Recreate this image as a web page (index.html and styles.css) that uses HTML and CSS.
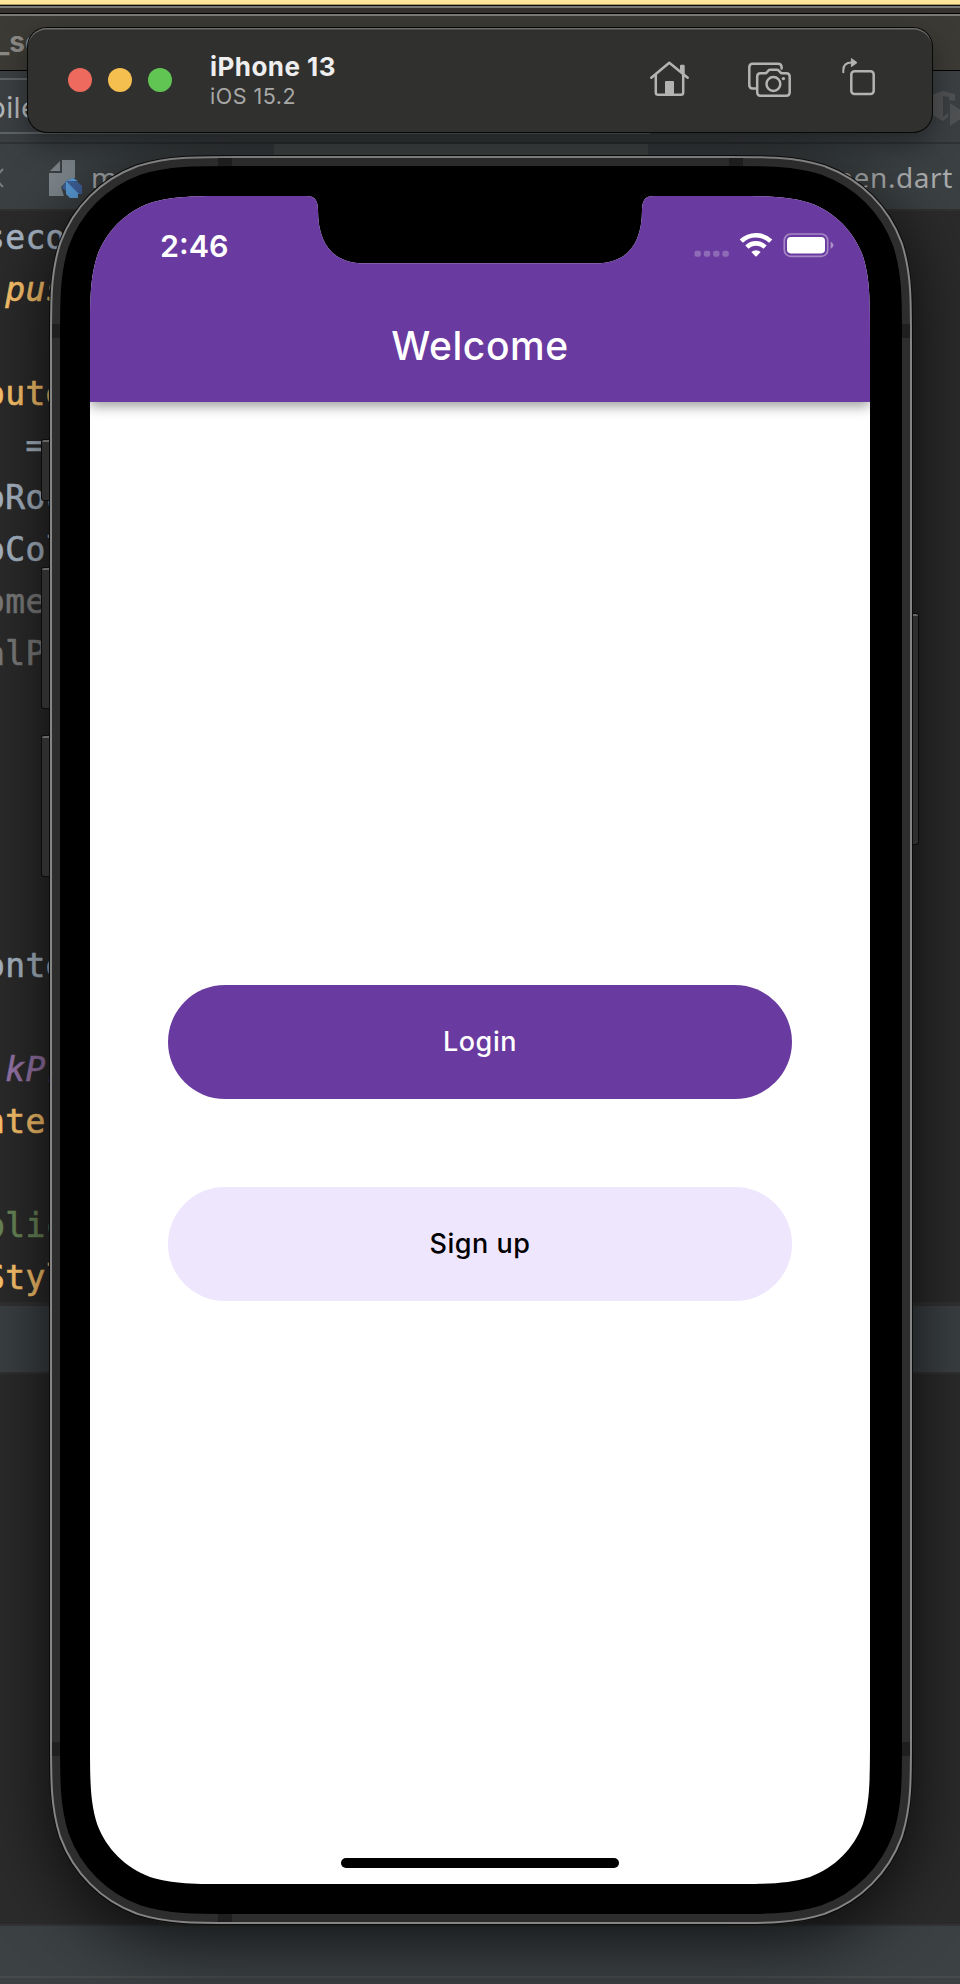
FILE: index.html
```html
<!DOCTYPE html>
<html lang="en">
<head>
<meta charset="utf-8">
<title>iPhone 13</title>
<link rel="stylesheet" href="styles.css">
</head>
<body>
<div class="desktop">
  <div class="editor">
    <div class="editor-top"></div>
    <div class="editor-strip"></div>
    <div class="editor-title">_sc</div>
    <div class="editor-toolbar">
      <div class="run-config">bile</div>
      <svg class="coverage-icon" viewBox="931 88 29 42" width="29" height="42"><path fill="#505152" d="M931 95L943 91L955 94V101L949 100V97L943 96V117L948 113V117L943 121L931 114ZM950 103L962 111V118L950 126Z"/></svg>
    </div>
    <div class="editor-tabs">
      <svg class="tab-close" viewBox="0 0 4 20" width="4" height="20"><path d="M-14 1L3 19M3 1L-14 19" stroke="#7b7e80" stroke-width="2"/></svg>
      <svg class="file-icon" viewBox="48 159 36 40" width="36" height="40">
        <path fill="#7d868b" d="M62 160H75V178L68 180L61 187L64 196H49V173H62Z"/>
        <path fill="#7d868b" d="M50 171L60 161V171Z"/>
        <path fill="#3f629c" d="M62 188L66 181L73 178L82 186V194H70Z"/>
        <path fill="#5b9fdb" d="M66 181L79 194H78V198H70L66 194ZM66 181L73 178L78 181Z"/>
      </svg>
      <span class="tab-name">main</span>
      <span class="tab-name tab-name-last">screen.dart</span>
      <div class="tab-selected"></div>
    </div>
    <pre class="code"><span class="c-text">secon</span>
<span class="c-fn c-it"> pus</span>

<span class="c-fn">oute</span>
<span class="c-text">  =</span>
<span class="c-text">oRou</span>
<span class="c-text">oCol</span>
<span class="c-dim">ome</span>
<span class="c-dim">alP</span>





<span class="c-text">onte</span>

<span class="c-const c-it"> kPr</span>
<span class="c-fn">nte</span>

<span class="c-str">plic</span>
<span class="c-fn">Styl</span></pre>
    <div class="panel-header"></div>
    <div class="panel-body"></div>
    <div class="panel-footer"></div>
    <div class="status-line"></div>
  </div>

  <div class="device">
    <div class="side-button mute"></div>
    <div class="side-button volume-up"></div>
    <div class="side-button volume-down"></div>
    <div class="side-button power"></div>
    <svg class="frame" viewBox="-40 -40 862 1768" width="862" height="1768">
      <defs>
        <path id="body" d="M145.2 0H636.8C678.6 0 699.5 0 722 7.1C746.6 16.1 765.9 35.4 774.9 60C782 82.5 782 103.4 782 145.2V1542.8C782 1584.6 782 1605.5 774.9 1628C765.9 1652.6 746.6 1671.9 722 1680.9C699.5 1688 678.6 1688 636.8 1688H145.2C103.4 1688 82.5 1688 60 1680.9C35.4 1671.9 16.1 1652.6 7.1 1628C0 1605.5 0 1584.6 0 1542.8V145.2C0 103.4 0 82.5 7.1 60C16.1 35.4 35.4 16.1 60 7.1C82.5 0 103.4 0 145.2 0Z"/>
      </defs>
      <use href="#body" stroke="#0b0b0b" stroke-width="82"/>
      <use href="#body" stroke="#858585" stroke-width="80"/>
      <use href="#body" stroke="#2d2d2d" stroke-width="76"/>
      <path fill="#1f1f1f" d="M128-38h14v8h-14zM639-38h14v8h-14zM128 1718h14v8h-14zM-38 128h8v14h-8zM812 128h8v14h-8zM-38 1546h8v14h-8zM812 1546h8v14h-8z"/>
      <use href="#body" stroke="#000" stroke-width="60"/>
    </svg>
    <div class="screen">
      <header class="app-bar">
        <div class="status-bar">
          <span class="clock">2:46</span>
          <svg class="status-icons" viewBox="694 228 142 34" width="142" height="34">
            <g fill="#fff" fill-opacity=".25"><rect x="694.5" y="250.7" width="6.4" height="6" rx="2"/><rect x="703.8" y="250.7" width="6.4" height="6" rx="2"/><rect x="713.1" y="250.7" width="6.4" height="6" rx="2"/><rect x="722.4" y="250.7" width="6.4" height="6" rx="2"/></g>
            <g fill="none" stroke="#fff" stroke-width="4.6"><path d="M741.3 241.2A21 21 0 0 1 770.7 241.2"/><path d="M746.9 247.2A12.8 12.8 0 0 1 765.1 247.2"/></g>
            <path fill="#fff" d="M751.4 252.1A6.6 6.6 0 0 1 760.6 252.1L756.6 256.3Q756 256.9 755.4 256.3Z"/>
            <rect x="784.3" y="234" width="43.4" height="22.4" rx="6.5" fill="none" stroke="#fff" stroke-opacity=".4" stroke-width="1.7"/>
            <rect x="787" y="237" width="38" height="16.4" rx="3.8" fill="#fff"/>
            <path d="M830.6 241.5Q833.4 243 833.4 245.3Q833.4 247.6 830.6 249Z" fill="#fff" fill-opacity=".45"/>
          </svg>
        </div>
        <h1 class="title">Welcome</h1>
      </header>
      <main class="actions">
        <button class="btn btn-primary">Login</button>
        <button class="btn btn-light">Sign up</button>
      </main>
      <div class="home-indicator"></div>
    </div>
  </div>

  <div class="titlebar">
    <div class="lights"><i class="light red"></i><i class="light yellow"></i><i class="light green"></i></div>
    <div class="names"><div class="name">iPhone 13</div><div class="os">iOS 15.2</div></div>
    <svg class="tools" viewBox="648 54 230 46" width="230" height="46" fill="none" stroke="#b3b3b1" stroke-width="2.5" stroke-linecap="round" stroke-linejoin="round">
      <path d="M651.3 76.7L669.3 61.7L687.7 76.7M655.8 74V91.5Q655.8 93.8 658.1 93.8H681Q683.2 93.8 683.2 91.5V74"/>
      <path fill="#b3b3b1" stroke="none" d="M680 65Q680 63.8 681.2 63.8H683.6Q684.7 63.8 684.7 65V75L680 71ZM665 81Q665 80 666 80H673Q674 80 674 81V94H665Z"/>
      <path d="M756.5 87.5H752.8Q749.3 87.5 749.3 84V66.3Q749.3 62.8 752.8 62.8H778Q781.6 62.8 781.6 66.3V67.5"/>
      <path d="M760.5 72.3H765Q766.3 72.3 767.2 71L768.2 69.8Q769 68.8 770.3 68.8H776.8Q778.1 68.8 779 69.8L780 71Q780.9 72.3 782.2 72.3H786.2Q789.7 72.3 789.7 75.8V91.2Q789.7 94.7 786.2 94.7H760.5Q757.2 94.7 757.2 91.2V75.8Q757.2 72.3 760.5 72.3Z"/>
      <circle cx="773.4" cy="83" r="6.9"/><circle cx="783.4" cy="77.6" r="1.7" fill="#b3b3b1" stroke="none"/>
      <rect x="851.3" y="70.2" width="22.4" height="22.8" rx="3.2"/>
      <path stroke-width="2" d="M843.3 71.3V69.5Q843.3 61.6 851.5 61.6"/>
      <path fill="#b3b3b1" stroke-width="1" d="M851.7 57.8L857 61.6L851.7 65.4Z"/>
    </svg>
  </div>
</div>
</body>
</html>
```
FILE: styles.css
```css
* { box-sizing: border-box; }
body { margin: 0; background: #2b2b2b; font-family: Inter, "Liberation Sans", sans-serif; }
.desktop { position: relative; width: 960px; height: 1984px; overflow: hidden; }

/* code editor behind the simulator */
.editor { display: flex; flex-direction: column; width: 960px; height: 1984px; }
.editor > * { flex: none; }
.editor-top { height: 5px; background: #ffe69b; border-bottom: 1px solid #b09c62; }
.editor-strip { height: 9px; background: #353230; border-top: 1px solid #0a0a0a; border-bottom: 1px solid #000; box-shadow: inset 0 2px #7b7a78; }
.editor-title { height: 57px; background: #3c3a35; border-bottom: 1px solid #000; box-shadow: inset 0 2px #7b7a76; font-size: 28px; font-weight: 700; line-height: 56px; color: #8b8985; text-indent: -4px; }
.editor-toolbar { height: 73px; background: #3b3f42; border-bottom: 2px solid #303234; padding-top: 7px; display: flex; justify-content: space-between; }
.run-config { width: 650px; height: 56px; border: solid #5e6365; border-width: 2px 0; font-size: 29px; line-height: 56px; color: #b4b7b9; text-indent: -12px; letter-spacing: .4px; }
.coverage-icon { margin-top: 10px; }
.editor-tabs { position: relative; height: 67px; background: #3b4042; border-bottom: 2px solid #303030; display: flex; align-items: flex-start; }
.tab-close { margin-top: 24px; }
.file-icon { margin: 15px 0 0 44px; }
.tab-name { font: 28px/40px "Noto Sans", sans-serif; color: #a9abac; margin: 13px 0 0 7px; letter-spacing: .6px; }
.tab-name-last { margin-left: auto; margin-right: 7px; }
.tab-selected { position: absolute; left: 274px; top: 0; width: 374px; height: 14px; background: #4a4d4f; }
.code { height: 1091px; margin: 0; padding-top: 1px; background: #2b2b2b; font: 33px/52px "DejaVu Sans Mono", monospace; letter-spacing: .33px; overflow: hidden; -webkit-text-stroke: .6px; }
.code span { margin-left: -15px; }
.c-text { color: #a9b7c6; }
.c-fn { color: #ffc66d; }
.c-dim { color: #7c7c7c; }
.c-const { color: #9876aa; }
.c-str { color: #6a8759; }
.c-it { font-style: italic; }
.panel-header { height: 72px; background: #3b4043; border-top: 4px solid #323232; border-bottom: 2px solid #323232; }
.panel-body { height: 550px; background: #2b2b2b; }
.panel-footer { height: 54px; background: #3c4144; border-top: 2px solid #333; border-bottom: 2px solid #48494a; }
.status-line { height: 6px; background: #3c4043; }

.device { position: absolute; left: 50px; top: 156px; width: 862px; height: 1768px; padding: 40px; border-radius: 135px; box-shadow: 0 16px 70px rgba(0,0,0,.75); }
.frame { position: absolute; left: 0; top: 0; overflow: visible; }

/* hardware buttons protrude from the phone body */
.side-button { position: absolute; left: -8px; width: 9px; background: #2e2e2e; border-top: 2px solid #676767; border-radius: 2px; box-shadow: 0 0 0 1px #0c0c0c; }
.mute { top: 284px; height: 60px; }
.volume-up { top: 412px; height: 140px; }
.volume-down { top: 580px; height: 140px; }
.power { left: 859px; top: 458px; height: 230px; }

.screen { position: relative; width: 780px; height: 1688px; background: #fff; display: flex; flex-direction: column;
  clip-path: path("M145.2 0H216C225 0 227.7 4 228 14C228 48 243 67.3 274 67.3H506C537 67.3 552 48 552 14C552.3 4 555 0 564 0H634.8C676.6 0 697.5 0 720 7.1C744.6 16.1 763.9 35.4 772.9 60C780 82.5 780 103.4 780 145.2V1542.8C780 1584.6 780 1605.5 772.9 1628C763.9 1652.6 744.6 1671.9 720 1680.9C697.5 1688 676.6 1688 634.8 1688H145.2C103.4 1688 82.5 1688 60 1680.9C35.4 1671.9 16.1 1652.6 7.1 1628C0 1605.5 0 1584.6 0 1542.8V145.2C0 103.4 0 82.5 7.1 60C16.1 35.4 35.4 16.1 60 7.1C82.5 0 103.4 0 145.2 0Z"); }
.app-bar { height: 206px; background: #693a9f; color: #fff; box-shadow: 0 4px 12px rgba(0,0,0,.4); flex: none; }
.status-bar { height: 94px; padding: 4px 34px 0 70px; display: flex; justify-content: space-between; align-items: center; }
.clock { font-size: 30.5px; font-weight: 600; margin-top: 1px; }
.status-icons { margin-top: -1px; }
.title { margin: 0; height: 112px; line-height: 112px; text-align: center; font-size: 39px; font-weight: 500; letter-spacing: .55px; }
.actions { flex: 1; display: flex; flex-direction: column; align-items: center; gap: 88px; padding-top: 583px; }
.btn { width: 624px; height: 114px; border: 0; border-radius: 57px; font: 500 27px/34px Inter, sans-serif; letter-spacing: .55px; }
.btn-primary { background: #693a9f; color: #fff; }
.btn-light { background: #eee6fd; color: #000; }
.home-indicator { width: 278px; height: 10px; border-radius: 5px; background: #000; margin: 0 auto 16px; flex: none; }

.titlebar { position: absolute; left: 28px; top: 28px; width: 904px; height: 104px; border-radius: 19px; background: #30302e; box-shadow: 0 0 0 1px #080808, inset 0 2px 0 -.5px #6c6c6a, 0 12px 30px rgba(0,0,0,.4); display: flex; align-items: center; padding: 0 54px 0 40px; }
.lights { display: flex; gap: 16px; }
.light { width: 24px; height: 24px; border-radius: 50%; }
.red { background: #ee6a5f; }
.yellow { background: #f5bf4f; }
.green { background: #61c554; }
.names { margin: 2px 0 0 38px; }
.name { font-size: 26px; font-weight: 700; line-height: 30px; color: #eee; letter-spacing: .45px; }
.os { font-size: 21.5px; line-height: 28px; color: #a8a8a7; letter-spacing: .5px; }
.tools { margin: -5px 0 0 auto; }
```
